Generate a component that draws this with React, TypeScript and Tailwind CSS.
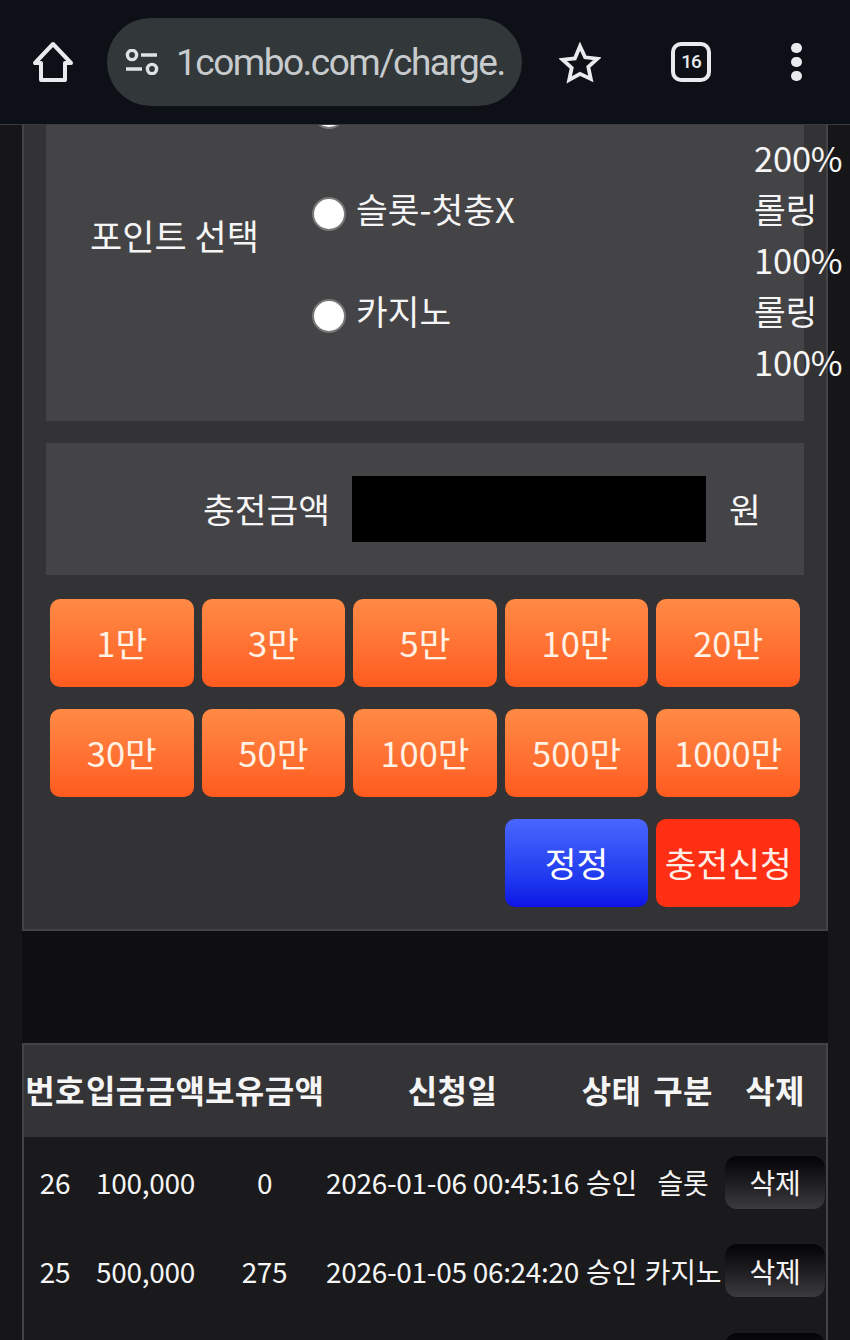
const amounts = ["1만", "3만", "5만", "10만", "20만", "30만", "50만", "100만", "500만", "1000만"];
const points = ["슬롯-첫충X", "카지노"];
const rolling = ["200%", "롤링", "100%", "롤링", "100%"];
const cols = "grid grid-cols-[62px_119px_119px_257px_61px_82px_1fr] items-center";

const rows = [
  { no: "26", amount: "100,000", held: "0", date: "2026-01-06 00:45:16", state: "승인", kind: "슬롯", del: "삭제" },
  { no: "25", amount: "500,000", held: "275", date: "2026-01-05 06:24:20", state: "승인", kind: "카지노", del: "삭제" },
  { no: "", amount: "", held: "", date: "", state: "", kind: "", del: "" },
];

const BrowserBar = () => (
  <div className="relative z-10 flex h-[125px] shrink-0 items-center border-b border-[#3a3b40] bg-[#0d1117]">
    <svg className="ml-[32px] h-[42px] w-[42px] text-[#e8eaed]" viewBox="0 0 42 42" fill="none" stroke="currentColor" strokeWidth="4" strokeLinejoin="round">
      <path d="M21 3 3 22h6v17h24V22h6z" />
    </svg>
    <div className="ml-[33px] flex h-[88px] w-[415px] items-center overflow-hidden rounded-[44px] bg-[#32373a] pl-[18px]">
      <svg className="h-[26px] w-[34px] shrink-0 text-[#dfe2e4]" viewBox="0 0 34 26" fill="none" stroke="currentColor" strokeWidth="3.4">
        <circle cx="7" cy="6" r="4.6" />
        <path d="M16 6h16M1 20h16" />
        <circle cx="27" cy="20" r="4.6" />
      </svg>
      <div className="ml-[17px] whitespace-nowrap pt-[2px] font-['Roboto',sans-serif] text-[37px] tracking-[-1.5px] text-[#c8cbcd]">1combo.com/charge.</div>
    </div>
    <svg className="ml-[37px] mt-[2px] h-[42px] w-[42px] text-[#e8eaed]" viewBox="0 0 40 40" fill="none" stroke="currentColor" strokeWidth="3.6" strokeLinejoin="miter">
      <path d="M20 4l4.9 10.6 11.6 1.3-8.6 7.8 2.4 11.4L20 30.3 9.7 36.1l2.4-11.4-8.6-7.8 11.6-1.3z" />
    </svg>
    <div className="ml-[70px] flex h-[40px] w-[40px] items-center justify-center rounded-[10px] border-[4px] border-[#e8eaed] font-['Roboto',sans-serif] text-[19px] font-medium tracking-[-1px] text-[#e8eaed]">16</div>
    <div className="ml-[80px] flex flex-col gap-[4px]">
      <span className="h-[10px] w-[11px] rounded-full bg-[#e8eaed]" />
      <span className="h-[10px] w-[11px] rounded-full bg-[#e8eaed]" />
      <span className="h-[10px] w-[11px] rounded-full bg-[#e8eaed]" />
    </div>
  </div>
);

const PointSelect = () => (
  <div className="flex h-[296px] bg-[#444346]">
    <div className="flex w-[266px] shrink-0 items-center pb-[76px] pl-[44px] text-[35px]">포인트 선택</div>
    <div className="-mt-[46px] flex shrink-0 flex-col gap-[46px]">
      <div className="flex h-[56px] items-center">
        <input type="radio" readOnly className="mt-[10px] h-[34px] w-[34px] appearance-none rounded-full border-2 border-[#777] bg-white" />
      </div>
      {points.map((p) => (
        <div key={p} className="flex h-[56px] items-center gap-[10px]">
          <input type="radio" readOnly className="mt-[10px] h-[34px] w-[34px] appearance-none rounded-full border-2 border-[#777] bg-white" />
          <span className="w-[398px]">{p}</span>
        </div>
      ))}
    </div>
    <div className="mt-[7px] flex shrink-0 flex-col leading-[51px] tracking-[-0.2px]">
      {rolling.map((r, i) => (
        <div key={i} className="whitespace-nowrap">{r}</div>
      ))}
    </div>
  </div>
);

const ChargeForm = () => (
  <div className="flex h-[132px] items-center bg-[#444346] pl-[157px]">
    <span>충전금액</span>
    <div className="ml-[22px] h-[66px] w-[354px] bg-black" />
    <span className="ml-[23px]">원</span>
  </div>
);

const AmountButtons = () => (
  <div className="mt-[24px] grid grid-cols-5 gap-x-[8px] gap-y-[22px] px-[4px]">
    {amounts.map((a) => (
      <button key={a} className="flex h-[88px] items-center justify-center rounded-[10px] bg-linear-to-b from-[#ff8a45] to-[#ff5a1e] text-[#fff1e4]">
        {a}
      </button>
    ))}
    <div className="col-span-3" />
    <button className="flex h-[88px] items-center justify-center rounded-[10px] bg-linear-to-b from-[#4a66ff] to-[#1010e6] text-white">정정</button>
    <button className="flex h-[88px] items-center justify-center rounded-[10px] bg-[#ff2f14] text-[#ffeee6]">충전신청</button>
  </div>
);

const History = () => (
  <div className="border-l-2 border-r-2 border-t-2 border-[#444346] bg-[#1a191b]">
    <div className={`${cols} h-[92px] bg-[#343336] pb-[4px] text-center text-[32px] font-bold tracking-[0.4px]`}>
      <div className="whitespace-nowrap">번호</div>
      <div className="whitespace-nowrap">입금금액</div>
      <div className="whitespace-nowrap">보유금액</div>
      <div>신청일</div>
      <div className="whitespace-nowrap">상태</div>
      <div className="whitespace-nowrap">구분</div>
      <div className="whitespace-nowrap">삭제</div>
    </div>
    {rows.map((r, i) => (
      <div key={i} className={`${cols} h-[88.5px] pt-[2px] text-center text-[28px] tracking-[-0.3px]`}>
        <div>{r.no}</div>
        <div>{r.amount}</div>
        <div>{r.held}</div>
        <div className="whitespace-nowrap">{r.date}</div>
        <div>{r.state}</div>
        <div>{r.kind}</div>
        <div className="flex justify-center">
          <button className="flex h-[53px] w-[100px] items-center justify-center rounded-[12px] bg-linear-to-b from-[#050406] to-[#3c3b3e]">{r.del}</button>
        </div>
      </div>
    ))}
  </div>
);

export default function App() {
  return (
    <div className="flex h-[1340px] w-[850px] flex-col overflow-hidden bg-[#161517] font-['Noto_Sans_CJK_KR','Noto_Sans',sans-serif] text-[34.5px] text-[#f5f5f5]">
      <BrowserBar />
      <div className="mx-[22px]">
        <div className="border-b-2 border-l-2 border-r-2 border-[#444346] bg-[#333234] px-[22px] pb-[22px]">
          <PointSelect />
          <div className="mt-[22px]">
            <ChargeForm />
          </div>
          <AmountButtons />
        </div>
        <div className="bg-[#0f0e10] pt-[112px]">
          <History />
        </div>
      </div>
    </div>
  );
}
